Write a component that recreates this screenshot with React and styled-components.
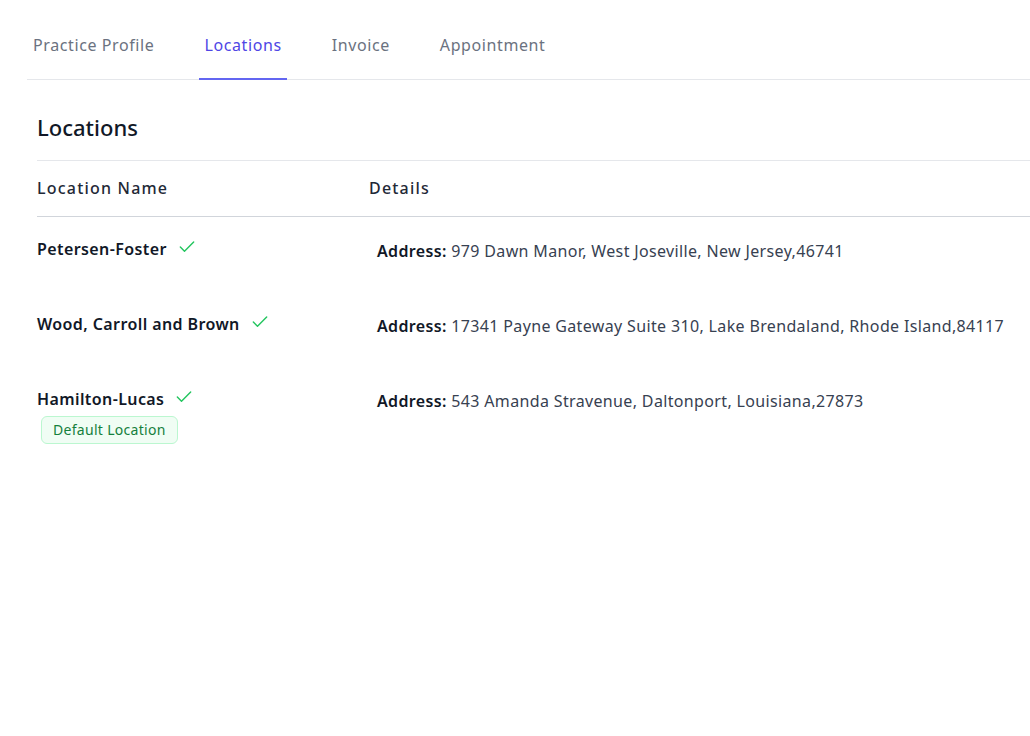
import React from 'react';
import styled, { createGlobalStyle } from 'styled-components';
import { Check } from 'lucide-react';

const GlobalStyle = createGlobalStyle`
  body {
    margin: 0;
    background: #ffffff;
    font-family: "Noto Sans", "Open Sans", sans-serif;
    color: #111827;
    overflow: hidden;
  }
`;

const Page = styled.div`
  padding: 22px 0 0 27px;
`;

const TabBar = styled.nav`
  display: flex;
  gap: 40px;
  border-bottom: 1px solid #e5e7eb;
  padding-left: 1px;
`;

const Tab = styled.button`
  background: none;
  border: none;
  border-bottom: 2px solid ${({ $active }) => ($active ? '#6366f1' : 'transparent')};
  margin-bottom: -1px;
  padding: 11px 5px 21px;
  font-family: inherit;
  font-size: 16px;
  line-height: 24px;
  letter-spacing: 0.6px;
  color: ${({ $active }) => ($active ? '#4f46e5' : '#6b7280')};
  cursor: pointer;
`;

const Section = styled.section`
  padding: 32px 0 0 10px;
`;

const Heading = styled.h2`
  margin: 0;
  padding-bottom: 18px;
  border-bottom: 1px solid #e5e7eb;
  font-size: 22px;
  line-height: 30px;
  font-weight: 500;
  color: #111827;
`;

const Table = styled.div`
  display: grid;
  grid-template-columns: 332px 1fr;
`;

const HeadCell = styled.div`
  padding: 15px 0 16px;
  border-bottom: 1px solid #d1d5db;
  font-size: 16px;
  line-height: 24px;
  font-weight: 500;
  letter-spacing: 1.2px;
  color: #1f2937;
`;

const NameCell = styled.div`
  padding: 20px 0 31px;
  font-size: 16px;
  line-height: 24px;
  font-weight: 600;
  letter-spacing: 0.4px;
  color: #111827;
`;

const NameLine = styled.div`
  display: flex;
  align-items: center;
  gap: 10px;
`;

const Tick = styled(Check)`
  color: #22c55e;
  margin-top: -4px;
`;

const Badge = styled.span`
  display: inline-block;
  margin: 5px 0 0 4px;
  padding: 0 11px;
  border: 1px solid #bbf7d0;
  border-radius: 6px;
  background: #f0fdf4;
  color: #15803d;
  font-size: 14px;
  line-height: 26px;
  font-weight: 400;
  letter-spacing: 0.3px;
`;

const DetailCell = styled.div`
  padding: 22px 0 0 8px;
  font-size: 16px;
  line-height: 24px;
  letter-spacing: 0.35px;
  color: #374151;
  white-space: nowrap;
`;

const Label = styled.strong`
  font-weight: 600;
  color: #111827;
`;

const tabs = ['Practice Profile', 'Locations', 'Invoice', 'Appointment'];

const locations = [
  { name: 'Petersen-Foster', address: '979 Dawn Manor, West Joseville, New Jersey,46741' },
  { name: 'Wood, Carroll and Brown', address: '17341 Payne Gateway Suite 310, Lake Brendaland, Rhode Island,84117' },
  { name: 'Hamilton-Lucas', address: '543 Amanda Stravenue, Daltonport, Louisiana,27873', isDefault: true },
];

export default function App() {
  return (
    <Page>
      <GlobalStyle />
      <TabBar>
        {tabs.map((t) => (
          <Tab key={t} $active={t === 'Locations'}>{t}</Tab>
        ))}
      </TabBar>
      <Section>
        <Heading>Locations</Heading>
        <Table>
          <HeadCell>Location Name</HeadCell>
          <HeadCell>Details</HeadCell>
          {locations.map((loc) => (
            <React.Fragment key={loc.name}>
              <NameCell>
                <NameLine>
                  {loc.name}
                  <Tick size={20} strokeWidth={1.7} />
                </NameLine>
                {loc.isDefault && <Badge>Default Location</Badge>}
              </NameCell>
              <DetailCell>
                <Label>Address:</Label> {loc.address}
              </DetailCell>
            </React.Fragment>
          ))}
        </Table>
      </Section>
    </Page>
  );
}
